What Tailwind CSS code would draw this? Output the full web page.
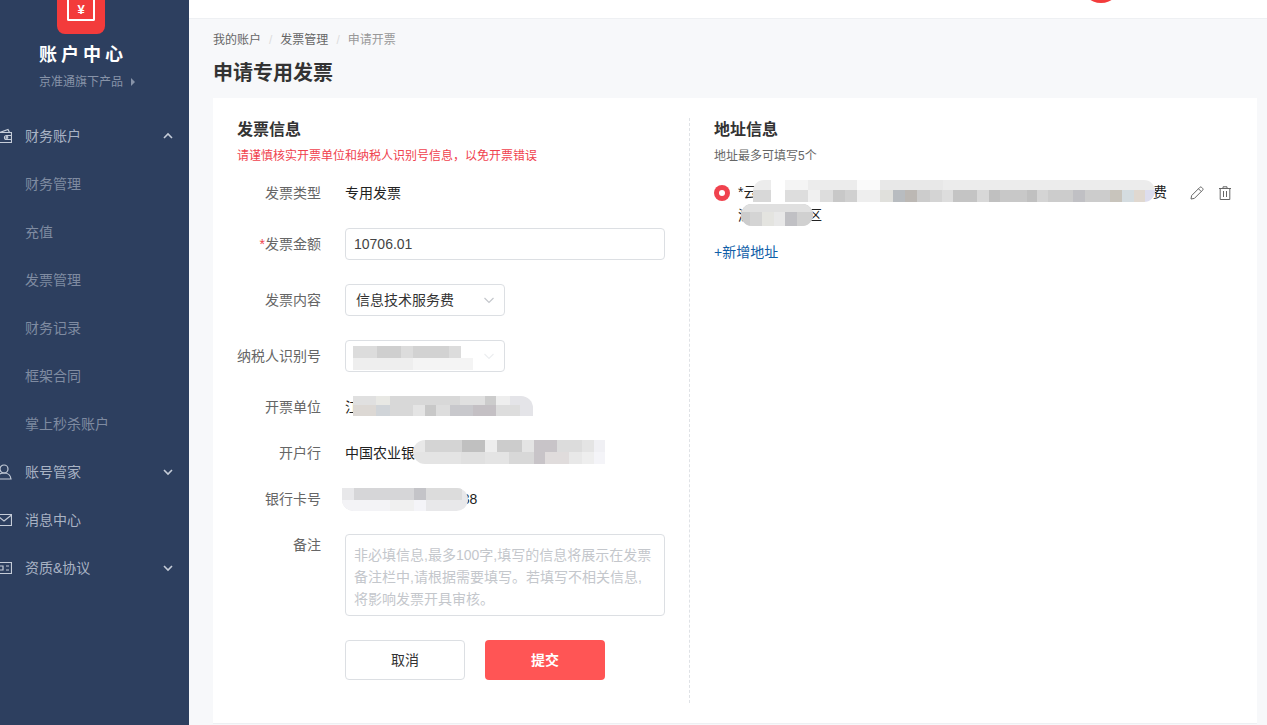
<!DOCTYPE html>
<html lang="zh-CN">
<head>
    <meta charset="UTF-8">
    <title>申请专用发票</title>
    <script src="https://cdn.jsdelivr.net/npm/@tailwindcss/browser@4"></script>
</head>
<body class="flex h-screen overflow-hidden bg-[#f7f8fa] text-sm text-[#333] font-['Liberation_Sans','Noto_Sans_CJK_SC',sans-serif]">

    <!-- 侧边栏 -->
    <aside class="w-[189px] shrink-0 bg-[#2d3f5f] text-[#a9b3c4]">
        <div class="ml-[57px] flex h-[34px] w-12 items-start justify-center rounded-b-lg bg-[#f33b3b]">
            <div class="flex h-[21px] w-[28px] items-center justify-center rounded-b-[2px] border-x-2 border-b-2 border-white text-[13px] font-bold leading-none text-white">¥</div>
        </div>
        <div class="mt-[9px] pl-[39px] text-lg font-bold leading-6 tracking-[4px] text-white">账户中心</div>
        <div class="mt-[5px] flex h-[20px] items-center pl-[39px] text-xs text-[#8793a8]">
            京准通旗下产品
            <span class="ml-[8px] h-0 w-0 border-y-[4px] border-l-[4px] border-y-transparent border-l-[#8793a8]"></span>
        </div>
        <nav class="mt-[20px]">
            <div class="flex h-12 items-center pr-[15px]">
                <svg class="ml-[-4px] mr-[13px] h-4 w-4" viewBox="0 0 16 16" fill="none" stroke="#c5ccd8" stroke-width="1.2"><path d="M.5 4.500h15v10H.5z"/><path d="M4 4.500 12 1.500l1.500 3"/><path d="M15.500 7.500h-5a2 2 0 0 0 0 4h5"/><circle cx="11" cy="9.500" r=".8"/></svg>
                <span class="flex-1">财务账户</span>
                <svg class="h-3 w-3" viewBox="0 0 12 12" fill="none" stroke="#c5ccd8" stroke-width="1.6"><path d="m2 8 4-4 4 4"/></svg>
            </div>
            <div class="flex h-12 items-center pl-[25px] text-[#7f8ba1]">财务管理</div>
            <div class="flex h-12 items-center pl-[25px] text-[#7f8ba1]">充值</div>
            <div class="flex h-12 items-center pl-[25px] text-[#7f8ba1]">发票管理</div>
            <div class="flex h-12 items-center pl-[25px] text-[#7f8ba1]">财务记录</div>
            <div class="flex h-12 items-center pl-[25px] text-[#7f8ba1]">框架合同</div>
            <div class="flex h-12 items-center pl-[25px] text-[#7f8ba1]">掌上秒杀账户</div>
            <div class="flex h-12 items-center pr-[15px]">
                <svg class="ml-[-4px] mr-[13px] h-4 w-4" viewBox="0 0 16 16" fill="none" stroke="#c5ccd8" stroke-width="1.2"><circle cx="8" cy="5" r="4"/><path d="M8 9c-3.500 0-6.500 2-7 6h14c-.5-4-3.500-6-7-6z"/></svg>
                <span class="flex-1">账号管家</span>
                <svg class="h-3 w-3" viewBox="0 0 12 12" fill="none" stroke="#c5ccd8" stroke-width="1.6"><path d="m2 4 4 4 4-4"/></svg>
            </div>
            <div class="flex h-12 items-center pr-[15px]">
                <svg class="ml-[-4px] mr-[13px] h-4 w-4" viewBox="0 0 16 16" fill="none" stroke="#c5ccd8" stroke-width="1.2"><path d="M.5 2.500h15v11H.5z"/><path d="m.5 3 7.500 6 7.500-6"/></svg>
                <span class="flex-1">消息中心</span>
            </div>
            <div class="flex h-12 items-center pr-[15px]">
                <svg class="ml-[-4px] mr-[13px] h-4 w-4" viewBox="0 0 16 16" fill="none" stroke="#c5ccd8" stroke-width="1.2"><path d="M.5 2.500h15v11H.5z"/><path d="M3 6h4v4H3zM10 6h3M10 10h3"/></svg>
                <span class="flex-1">资质&amp;协议</span>
                <svg class="h-3 w-3" viewBox="0 0 12 12" fill="none" stroke="#c5ccd8" stroke-width="1.6"><path d="m2 4 4 4 4-4"/></svg>
            </div>
        </nav>
    </aside>

    <div class="flex min-w-0 flex-1 flex-col">
        <!-- 顶栏 -->
        <header class="h-[19px] shrink-0 overflow-hidden border-b border-[#eef0f3] bg-white">
            <div class="ml-[892px] mt-[-37px] h-10 w-10 rounded-full bg-[#f33b3b]"></div>
        </header>

        <main class="flex min-h-0 flex-1 flex-col pl-[24px] pr-[10px]">
            <div class="mt-[12px] flex h-[18px] items-center text-xs text-[#666]">
                <span>我的账户</span>
                <span class="mx-[8px] text-[#ddd]">/</span>
                <span>发票管理</span>
                <span class="mx-[8px] text-[#ddd]">/</span>
                <span class="text-[#999]">申请开票</span>
            </div>
            <h1 class="mt-[10px] text-xl font-bold leading-7 text-[#333]">申请专用发票</h1>

            <!-- 卡片 -->
            <section class="relative mt-[11px] flex h-[626px] border-b border-[#eef0f3] bg-white">
                <div class="my-[20px] w-[477px] shrink-0 border-r border-dashed border-[#dfe2e6] pl-[24px]">
                    <h2 class="mt-[1px] text-base font-bold leading-[22px] text-[#333]">发票信息</h2>
                    <p class="mt-[7px] text-xs leading-[17px] text-[#f0424e]">请谨慎核实开票单位和纳税人识别号信息，以免开票错误</p>

                    <div class="mt-[12px] flex h-8 items-center">
                        <label class="w-[84px] text-right text-[#666]">发票类型</label>
                        <span class="ml-[24px] text-[#222]">专用发票</span>
                    </div>
                    <div class="mt-[19px] flex h-8 items-center">
                        <label class="w-[84px] text-right text-[#666]"><span class="text-[#f0424e]">*</span>发票金额</label>
                        <div class="ml-[24px] flex h-8 w-[320px] items-center rounded border border-[#dcdfe3] pl-[8px] text-[#444]">10706.01</div>
                    </div>
                    <div class="mt-[24px] flex h-8 items-center">
                        <label class="w-[84px] text-right text-[#666]">发票内容</label>
                        <div class="ml-[24px] flex h-8 w-[160px] items-center justify-between rounded border border-[#dcdfe3] pl-[10px] pr-[9px] text-[#333]">
                            信息技术服务费
                            <svg class="h-3 w-3" viewBox="0 0 12 12" fill="none" stroke="#c4c7cc" stroke-width="1.2"><path d="m1.500 4 4.500 4.500L10.500 4"/></svg>
                        </div>
                    </div>
                    <div class="mt-[24px] flex h-8 items-center">
                        <label class="w-[84px] text-right text-[#666]">纳税人识别号</label>
                        <div class="relative ml-[24px] flex h-8 w-[160px] items-center justify-end rounded border border-[#dcdfe3] pr-[9px]">
                            <svg class="h-3 w-3" viewBox="0 0 12 12" fill="none" stroke="#eceef0" stroke-width="1.2"><path d="m1.500 4 4.500 4.500L10.500 4"/></svg>
                            <svg class="absolute left-[7px] top-[5px]" width="120" height="24"><rect width="108" height="12" fill="#dcdcdc"/><rect x="24" width="24" height="12" fill="#cfcfcf"/><rect x="60" width="36" height="12" fill="#d2d2d2"/><rect y="12" width="120" height="12" fill="#f4f4f4"/><rect y="12" width="60" height="12" fill="#eeeeee"/></svg>
                        </div>
                    </div>
                    <div class="mt-[19px] flex h-8 items-center">
                        <label class="w-[84px] text-right text-[#666]">开票单位</label>
                        <div class="relative ml-[24px] text-[#222]">江
                            <svg class="absolute left-[8px] top-[-1px] rounded-tr-xl" width="180" height="20"><rect width="23" height="9" fill="#e0e0e0"/><rect x="23" width="14" height="9" fill="#e8e8e4"/><rect x="37" width="70" height="9" fill="#d8d8d8"/><rect x="107" width="25" height="9" fill="#e0e0e0"/><rect x="132" width="11" height="9" fill="#cccccc"/><rect x="143" width="14" height="9" fill="#eeeeee"/><rect x="157" width="23" height="9" fill="#e4e4e8"/><rect y="9" width="23" height="11" fill="#dcd8d4"/><rect x="23" y="9" width="14" height="11" fill="#d0d4d8"/><rect x="37" y="9" width="23" height="11" fill="#d8d8d8"/><rect x="60" y="9" width="12" height="11" fill="#e4e4e4"/><rect x="72" y="9" width="11" height="11" fill="#c8c8c8"/><rect x="83" y="9" width="14" height="11" fill="#dddddd"/><rect x="97" y="9" width="23" height="11" fill="#c8c8cc"/><rect x="120" y="9" width="23" height="11" fill="#c4c0c4"/><rect x="143" y="9" width="24" height="11" fill="#dddddd"/><rect x="167" y="9" width="13" height="11" fill="#e4e4e8"/></svg>
                        </div>
                    </div>
                    <div class="mt-[14px] flex h-8 items-center">
                        <label class="w-[84px] text-right text-[#666]">开户行</label>
                        <div class="relative ml-[24px] whitespace-nowrap text-[#222]">中国农业银行
                            <svg class="absolute left-[68px] top-[-3px] rounded-l-xl" width="192" height="24"><rect width="12" height="12" fill="#e8e8e8"/><rect x="12" width="37" height="12" fill="#d4d4d4"/><rect x="49" width="23" height="12" fill="#c0c0c0"/><rect x="72" width="12" height="12" fill="#eeeeee"/><rect x="84" width="25" height="12" fill="#cccccc"/><rect x="109" width="12" height="12" fill="#e4e4e4"/><rect x="121" width="23" height="12" fill="#c8c4c8"/><rect x="144" width="25" height="12" fill="#dcdcdc"/><rect x="169" width="12" height="12" fill="#e4e4e4"/><rect x="181" width="11" height="12" fill="#f0f0f4"/><rect y="12" width="48" height="12" fill="#e4e4e4"/><rect x="48" y="12" width="24" height="12" fill="#e0e0e0"/><rect x="72" y="12" width="24" height="12" fill="#e4e4e4"/><rect x="96" y="12" width="25" height="12" fill="#d8d8d8"/><rect x="121" y="12" width="11" height="12" fill="#c8c4c8"/><rect x="132" y="12" width="24" height="12" fill="#e0dcdc"/><rect x="156" y="12" width="13" height="12" fill="#e8e8e8"/><rect x="169" y="12" width="12" height="12" fill="#eeeeee"/><rect x="181" y="12" width="11" height="12" fill="#f4f4f8"/></svg>
                        </div>
                    </div>
                    <div class="mt-[14px] flex h-8 items-center">
                        <label class="w-[84px] text-right text-[#666]">银行卡号</label>
                        <div class="relative ml-[24px] whitespace-nowrap text-[#222]">00000000000000038
                            <svg class="absolute left-[-3px] top-[-1px] rounded-r-xl rounded-bl-xl" width="126" height="23"><rect width="126" height="23" fill="#e8e8ea"/><rect x="12" width="60" height="12" fill="#d6d6d8"/><rect x="72" width="12" height="12" fill="#c4c4c8"/><rect x="84" width="36" height="12" fill="#dcdcdc"/><rect y="12" width="48" height="11" fill="#f3f3f6"/><rect x="48" y="12" width="24" height="11" fill="#f0f0f0"/><rect x="72" y="12" width="12" height="11" fill="#f4f4f8"/></svg>
                        </div>
                    </div>
                    <div class="mt-[19px] flex">
                        <label class="w-[84px] pt-[1px] text-right leading-[20px] text-[#666]">备注</label>
                        <div class="ml-[24px] h-[82px] w-[320px] rounded border border-[#dcdfe3] pl-[8px] pr-[12px] pt-[9px] leading-[22px] text-[#c4c7cc]">非必填信息,最多100字,填写的信息将展示在发票备注栏中,请根据需要填写。若填写不相关信息,将影响发票开具审核。</div>
                    </div>
                    <div class="ml-[108px] mt-[24px] flex gap-[20px]">
                        <button class="h-10 w-[120px] rounded border border-[#dcdfe3] bg-white text-[#333]">取消</button>
                        <button class="h-10 w-[120px] rounded bg-[#ff5555] font-bold text-white">提交</button>
                    </div>
                </div>

                <!-- 地址信息 -->
                <div class="flex-1 pl-[24px] pt-[21px]">
                    <h2 class="text-base font-bold leading-[22px] text-[#333]">地址信息</h2>
                    <p class="mt-[7px] text-xs leading-[17px] text-[#666]">地址最多可填写5个</p>
                    <div class="relative mt-[12px] flex">
                        <span class="mt-[8px] flex h-4 w-4 items-center justify-center rounded-full bg-[#f0424e]"><span class="h-[6px] w-[6px] rounded-full bg-white"></span></span>
                        <div class="relative ml-[8px] w-[429px] leading-[23px] text-[#222]">
                            <div class="mt-[4px] flex justify-between"><span>*云</span><span>费</span></div>
                            <div class="flex w-[84px] justify-between"><span>湖</span><span>区</span></div>
                            <svg class="absolute left-[15px] top-[3px] rounded-tl-xl rounded-r-xl" width="402" height="22"><rect width="402" height="10" fill="#ececec"/><rect x="18" width="14" height="10" fill="#ffffff"/><rect x="32" width="23" height="10" fill="#f4f4f4"/><rect x="104" width="23" height="10" fill="#fafafa"/><rect x="127" width="63" height="10" fill="#e8e8e8"/><rect y="10" width="18" height="12" fill="#d8d8d8"/><rect x="18" y="10" width="14" height="12" fill="#ffffff"/><rect x="32" y="10" width="23" height="12" fill="#dddddd"/><rect x="55" y="10" width="12" height="12" fill="#f0f0f0"/><rect x="67" y="10" width="13" height="12" fill="#dddddd"/><rect x="80" y="10" width="12" height="12" fill="#c8c8c8"/><rect x="92" y="10" width="12" height="12" fill="#d0d0d0"/><rect x="104" y="10" width="23" height="12" fill="#eeeeee"/><rect x="127" y="10" width="13" height="12" fill="#e0e0dc"/><rect x="140" y="10" width="12" height="12" fill="#b8bcc0"/><rect x="152" y="10" width="12" height="12" fill="#bcb8b4"/><rect x="164" y="10" width="13" height="12" fill="#cccccc"/><rect x="177" y="10" width="12" height="12" fill="#d4d4d4"/><rect x="189" y="10" width="11" height="12" fill="#dddddd"/><rect x="200" y="10" width="24" height="12" fill="#c4c4c4"/><rect x="224" y="10" width="12" height="12" fill="#d8d8d8"/><rect x="236" y="10" width="11" height="12" fill="#c0c0c0"/><rect x="247" y="10" width="27" height="12" fill="#c8c8c8"/><rect x="274" y="10" width="10" height="12" fill="#c0c0c0"/><rect x="284" y="10" width="11" height="12" fill="#d4d4d4"/><rect x="295" y="10" width="25" height="12" fill="#cccccc"/><rect x="320" y="10" width="12" height="12" fill="#c0c0c4"/><rect x="332" y="10" width="25" height="12" fill="#cccccc"/><rect x="357" y="10" width="12" height="12" fill="#c8c4bc"/><rect x="369" y="10" width="12" height="12" fill="#d4dce0"/><rect x="381" y="10" width="11" height="12" fill="#e0d8d0"/><rect x="392" y="10" width="10" height="12" fill="#ddddee"/></svg>
                            <svg class="absolute left-[3px] top-[27px] rounded-xl" width="72" height="22"><rect width="72" height="22" fill="#dcdcdc"/><rect width="9" height="22" fill="#cccccc"/><rect x="9" width="12" height="22" fill="#d4d4d4"/><rect x="21" width="12" height="22" fill="#e4e4e0"/><rect x="33" width="11" height="22" fill="#e8e8e8"/><rect x="44" width="12" height="22" fill="#c0c0c4"/><rect x="56" width="16" height="22" fill="#d0d0d0"/><rect width="72" height="8" fill="#e0e0e0"/></svg>
                        </div>
                        <svg class="ml-[23px] mt-[9px] h-[14px] w-[14px]" viewBox="0 0 14 14" fill="none" stroke="#666" stroke-width="1"><path d="M1 13l.6-3.400L9.800 1.400a1.300 1.300 0 0 1 1.900 0l.9.900a1.300 1.300 0 0 1 0 1.900L4.400 12.400z"/><path d="M8.500 2.800l2.700 2.700"/></svg>
                        <svg class="ml-[14px] mt-[9px] h-[14px] w-[14px]" viewBox="0 0 14 14" fill="none" stroke="#666" stroke-width="1"><path d="M1 2.500h12M5 2.500V.8h4v1.700M2.200 2.500v11h9.600v-11M5.500 5v6M8.500 5v6"/></svg>
                    </div>
                    <div class="mt-[15px] leading-5 text-[#0f5ea8]">+新增地址</div>
                </div>
            </section>
        </main>
    </div>
</body>
</html>
